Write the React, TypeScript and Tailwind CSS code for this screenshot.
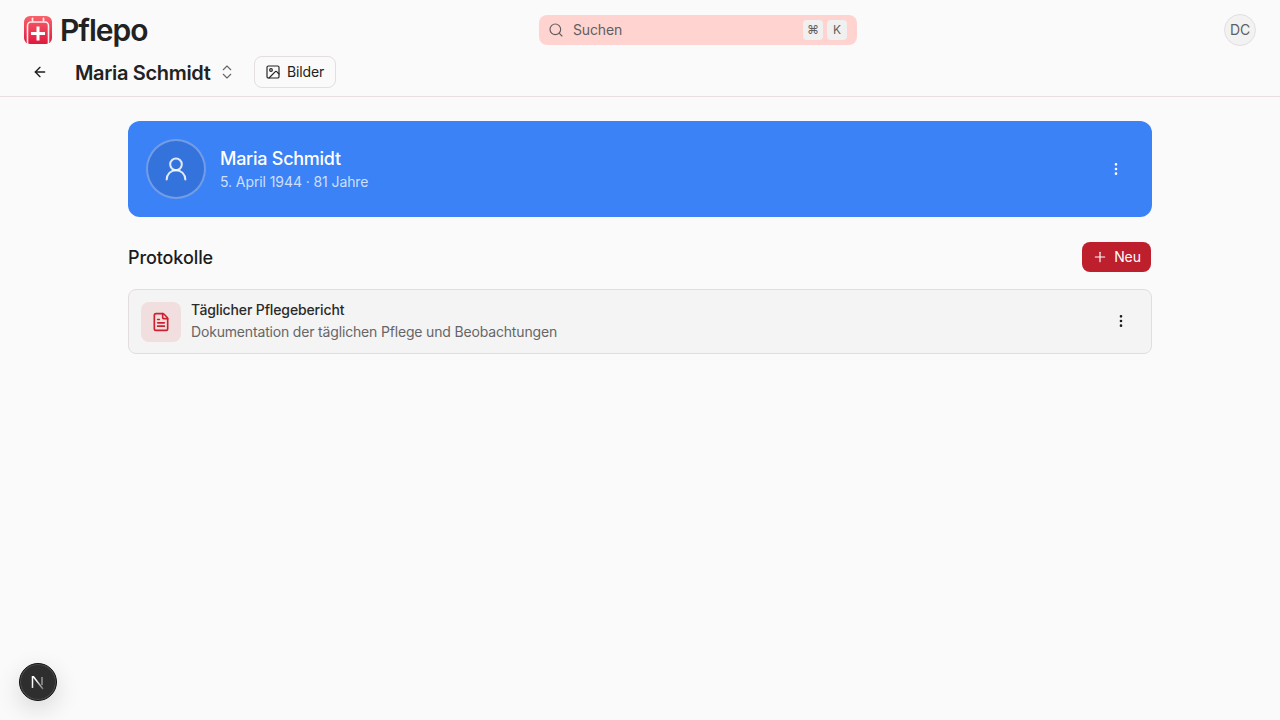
import React from 'react';
import { ArrowLeft, ChevronsUpDown, EllipsisVertical, FileText, Image, Plus, Search, UserRound } from 'lucide-react';

const Logo = () => (
    <svg width="28" height="28" viewBox="0 0 28 28" className="shrink-0">
        <defs>
            <linearGradient id="logoGrad" x1="0" y1="0" x2="0" y2="1">
                <stop offset="0" stopColor="#f8626a" />
                <stop offset="1" stopColor="#e0183f" />
            </linearGradient>
        </defs>
        <rect width="28" height="28" rx="6" fill="url(#logoGrad)" />
        <path d="M3.500 28V9.500a3.500 3.500 0 0 1 3.500-3.500h14a3.500 3.500 0 0 1 3.500 3.500V28" fill="none" stroke="#fff" strokeOpacity="0.9" strokeWidth="1.600" />
        <path d="M8.500 2.500v2M19.500 2.500v2" stroke="#fff" strokeOpacity="0.85" strokeWidth="1.800" strokeLinecap="round" />
        <path d="M14 10.500v14M7 17.500h14" stroke="#fff" strokeWidth="3" />
    </svg>
);

const NextBadge = () => (
    <div className="fixed left-[19px] bottom-[19px] w-[38px] h-[38px] rounded-full bg-[#2e2e2e] border border-[#111] ring-1 ring-inset ring-white/15 shadow-[0_8px_24px_rgba(0,0,0,0.14)] flex items-center justify-center">
        <svg width="16" height="16" viewBox="0 0 16 16" fill="none">
            <defs>
                <linearGradient id="nextGrad" x1="0" y1="0" x2="1" y2="1">
                    <stop offset="0.3" stopColor="#fff" />
                    <stop offset="1" stopColor="#fff" stopOpacity="0.35" />
                </linearGradient>
            </defs>
            <path d="M2.500 14V2.800h1L13 15" stroke="url(#nextGrad)" strokeWidth="1.500" />
            <path d="M12 3v8" stroke="#999" strokeWidth="1.500" />
        </svg>
    </div>
);

export default function App() {
    return (
        <div className="min-h-screen bg-[#fafafa] text-[#1c1c1c] font-['Inter',sans-serif] tracking-[-0.13px]">
            <header className="border-b border-[#eadfe0] h-[97px]">
                <div className="flex items-center pl-6 pr-6 h-[60px]">
                    <div className="flex items-center gap-2 w-[124px] shrink-0">
                        <Logo />
                        <span className="text-[30px] leading-none font-semibold tracking-[-1px] text-[#222]">Pflepo</span>
                    </div>
                    <div className="ml-[391px] w-[318px] h-[30px] rounded-lg bg-[#ffd4d0] flex items-center pl-[9px] pr-[10px] text-[#5f5f5f]">
                        <Search size={16} strokeWidth={1.75} />
                        <span className="ml-[9px] text-sm">Suchen</span>
                        <div className="ml-auto flex gap-1">
                            <kbd className="w-5 h-5 rounded bg-[#f0f0f0] flex items-center justify-center text-xs font-['Inter',sans-serif]">⌘</kbd>
                            <kbd className="w-5 h-5 rounded bg-[#f0f0f0] flex items-center justify-center text-xs font-['Inter',sans-serif]">K</kbd>
                        </div>
                    </div>
                    <div className="ml-auto w-8 h-8 rounded-full bg-[#f2f2f2] border border-[#e5dede] flex items-center justify-center text-sm text-[#5f5f5f]">
                        DC
                    </div>
                </div>
                <div className="flex items-center h-8 -mt-1 pl-6">
                    <button className="w-8 h-8 flex items-center justify-center">
                        <ArrowLeft size={16} strokeWidth={2} />
                    </button>
                    <h1 className="ml-[19px] text-xl font-semibold tracking-[-0.33px] translate-y-px text-[#222]">Maria Schmidt</h1>
                    <ChevronsUpDown size={18} strokeWidth={1.5} className="ml-[7px] text-[#666]" />
                    <button className="ml-[18px] h-8 w-[82px] rounded-lg border border-[#e5dede] bg-[#fafafa] flex items-center justify-center gap-[6px] text-sm font-normal text-[#222]">
                        <Image size={16} strokeWidth={1.75} />
                        Bilder
                    </button>
                </div>
            </header>

            <main className="w-[1024px] mx-auto pt-6">
                <section className="h-24 rounded-xl bg-[#3b82f6] flex items-center pl-[18px] pr-[28px] text-white">
                    <div className="w-[60px] h-[60px] rounded-full bg-[#3573dc] border-2 border-white/30 flex items-center justify-center">
                        <UserRound size={28} strokeWidth={1.75} className="text-white/85" />
                    </div>
                    <div className="ml-[14px] pb-[2px]">
                        <div className="text-lg font-medium leading-7 tracking-[-0.27px]">Maria Schmidt</div>
                        <div className="text-sm text-white/75 leading-5 -mt-px tracking-[-0.09px]">5. April 1944 · 81 Jahre</div>
                    </div>
                    <EllipsisVertical size={16} strokeWidth={2} className="ml-auto" />
                </section>

                <div className="flex items-center justify-between mt-[25px] pr-px">
                    <h2 className="text-lg font-medium tracking-[-0.1px] translate-y-px">Protokolle</h2>
                    <button className="h-[30px] w-[69px] rounded-lg bg-[#bd1f2d] text-white flex items-center justify-center gap-[6px] text-sm font-normal">
                        <Plus size={16} strokeWidth={1.75} />
                        Neu
                    </button>
                </div>

                <div className="mt-[17px] h-[65px] rounded-lg border border-[#e3dede] bg-[#f4f4f4] flex items-center pl-3 pr-[22px]">
                    <div className="w-10 h-10 rounded-lg bg-[#f1dfe0] flex items-center justify-center">
                        <FileText size={20} strokeWidth={2} className="text-[#cc2030]" />
                    </div>
                    <div className="ml-[10px] pb-[2px]">
                        <div className="text-sm font-medium leading-5 text-[#2a2a2a]">Täglicher Pflegebericht</div>
                        <div className="text-sm text-[#666] leading-5 mt-[2px] tracking-[-0.17px]">Dokumentation der täglichen Pflege und Beobachtungen</div>
                    </div>
                    <EllipsisVertical size={16} strokeWidth={2} className="ml-auto -translate-y-px" />
                </div>
            </main>

            <NextBadge />
        </div>
    );
}
